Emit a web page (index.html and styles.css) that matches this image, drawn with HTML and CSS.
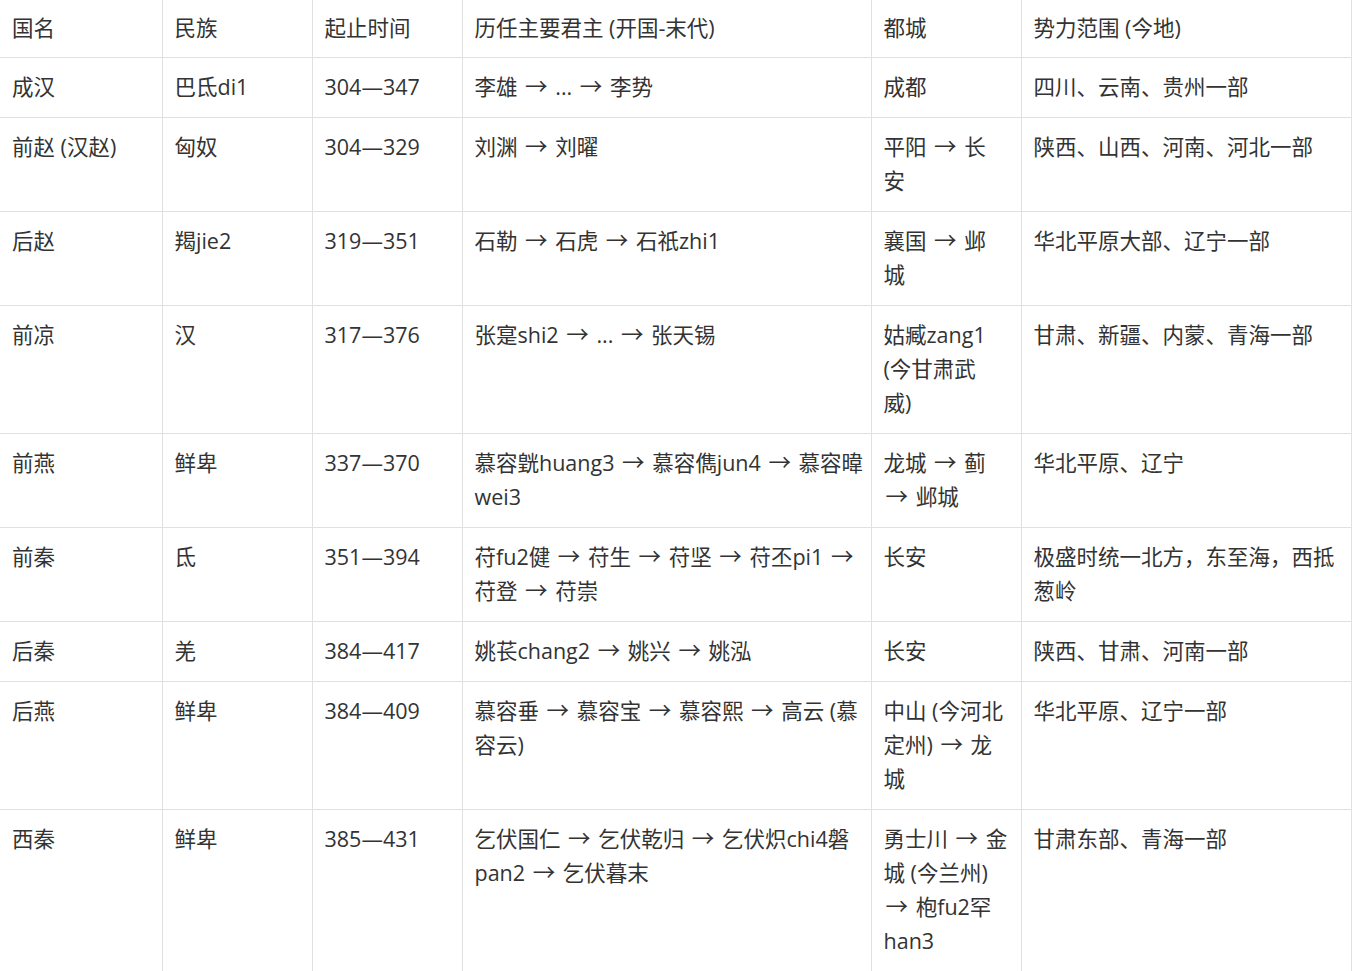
FILE: index.html
```html
<!DOCTYPE html>
<html lang="zh-CN">
<head>
<meta charset="utf-8">
<title>十六国</title>
<link rel="stylesheet" href="styles.css">
</head>
<body>
<table class="grid">
  <colgroup>
    <col class="c1"><col class="c2"><col class="c3"><col class="c4"><col class="c5"><col class="c6">
  </colgroup>
  <thead>
    <tr>
      <th>国名</th><th>民族</th><th>起止时间</th><th>历任主要君主 (开国-末代)</th><th>都城</th><th>势力范围 (今地)</th>
    </tr>
  </thead>
  <tbody>
    <tr><td>成汉</td><td>巴氐di1</td><td>304—347</td><td>李雄 <span class="arr">→</span> ... <span class="arr">→</span> 李势</td><td>成都</td><td>四川、云南、贵州一部</td></tr>
    <tr><td>前赵 (汉赵)</td><td>匈奴</td><td>304—329</td><td>刘渊 <span class="arr">→</span> 刘曜</td><td>平阳 <span class="arr">→</span> 长<br>安</td><td>陕西、山西、河南、河北一部</td></tr>
    <tr><td>后赵</td><td>羯jie2</td><td>319—351</td><td>石勒 <span class="arr">→</span> 石虎 <span class="arr">→</span> 石祇zhi1</td><td>襄国 <span class="arr">→</span> 邺<br>城</td><td>华北平原大部、辽宁一部</td></tr>
    <tr><td>前凉</td><td>汉</td><td>317—376</td><td>张寔shi2 <span class="arr">→</span> ... <span class="arr">→</span> 张天锡</td><td>姑臧zang1<br>(今甘肃武<br>威)</td><td>甘肃、新疆、内蒙、青海一部</td></tr>
    <tr><td>前燕</td><td>鲜卑</td><td>337—370</td><td>慕容皝huang3 <span class="arr">→</span> 慕容儁jun4 <span class="arr">→</span> 慕容暐<br>wei3</td><td>龙城 <span class="arr">→</span> 蓟<br><span class="arr">→</span> 邺城</td><td>华北平原、辽宁</td></tr>
    <tr><td>前秦</td><td>氐</td><td>351—394</td><td>苻fu2健 <span class="arr">→</span> 苻生 <span class="arr">→</span> 苻坚 <span class="arr">→</span> 苻丕pi1 <span class="arr">→</span><br>苻登 <span class="arr">→</span> 苻崇</td><td>长安</td><td>极盛时统一北方，东至海，西抵<br>葱岭</td></tr>
    <tr><td>后秦</td><td>羌</td><td>384—417</td><td>姚苌chang2 <span class="arr">→</span> 姚兴 <span class="arr">→</span> 姚泓</td><td>长安</td><td>陕西、甘肃、河南一部</td></tr>
    <tr><td>后燕</td><td>鲜卑</td><td>384—409</td><td>慕容垂 <span class="arr">→</span> 慕容宝 <span class="arr">→</span> 慕容熙 <span class="arr">→</span> 高云 (慕<br>容云)</td><td>中山 (今河北<br>定州) <span class="arr">→</span> 龙<br>城</td><td>华北平原、辽宁一部</td></tr>
    <tr><td>西秦</td><td>鲜卑</td><td>385—431</td><td>乞伏国仁 <span class="arr">→</span> 乞伏乾归 <span class="arr">→</span> 乞伏炽chi4磐<br>pan2 <span class="arr">→</span> 乞伏暮末</td><td>勇士川 <span class="arr">→</span> 金<br>城 (今兰州)<br><span class="arr">→</span> 枹fu2罕<br>han3</td><td>甘肃东部、青海一部</td></tr>
  </tbody>
</table>
</body>
</html>
```

FILE: styles.css
```css
html, body {
  margin: 0;
  padding: 0;
  background: #ffffff;
}

body {
  font-family: "Open Sans", "Liberation Sans", "Noto Sans CJK SC", sans-serif;
  font-size: 21.5px;
  color: #333333;
}

.grid {
  border-collapse: collapse;
  table-layout: fixed;
  width: 1351px;
}

.c1 { width: 162px; }
.c2 { width: 150px; }
.c3 { width: 150px; }
.c4 { width: 409px; }
.c5 { width: 150px; }
.c6 { width: 330px; }

.grid th,
.grid td {
  border: 1px solid #e0e0e0;
  padding: 12px 12px 13px 12px;
  line-height: 34px;
  height: 34px;
  text-align: left;
  vertical-align: top;
  font-weight: normal;
  white-space: nowrap;
}

.grid thead th {
  border-top: none;
  padding-top: 11px;
  padding-bottom: 12px;
}

.grid th:first-child,
.grid td:first-child {
  border-left: none;
}

.arr {
  font-family: "Noto Sans CJK SC", sans-serif;
  font-size: 1.05em;
  line-height: 0;
  margin: 0 2px;
}
```
